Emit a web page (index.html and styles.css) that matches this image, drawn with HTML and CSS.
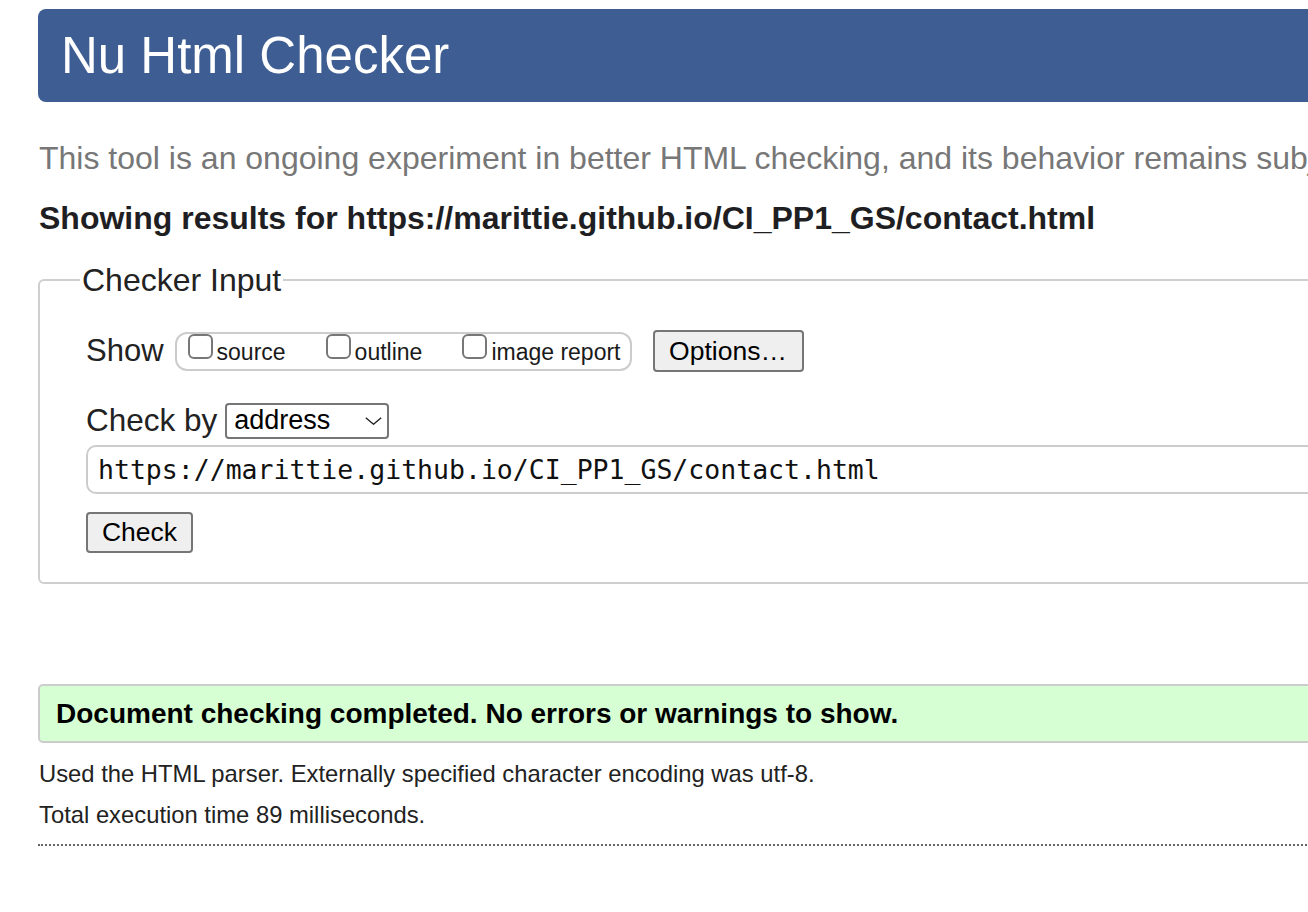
FILE: index.html
```html
<!DOCTYPE html>
<html lang="en">
<head>
<meta charset="utf-8">
<title>Nu Html Checker</title>
<link rel="stylesheet" href="styles.css">
</head>
<body>
<div class="page">
  <h1 class="masthead">Nu Html Checker</h1>
  <p class="intro">This tool is an ongoing experiment in better HTML checking, and its behavior remains subject to change</p>
  <p class="showing">Showing results for https://marittie.github.io/CI_PP1_GS/contact.html</p>
  <form class="checker">
    <fieldset class="input-set">
      <legend class="legend">Checker Input</legend>
      <div class="row show-row">
        <span class="label show-label">Show</span>
        <span class="options-group">
          <label class="opt"><span class="box"></span><span class="opt-text">source</span></label>
          <label class="opt"><span class="box"></span><span class="opt-text">outline</span></label>
          <label class="opt"><span class="box"></span><span class="opt-text">image report</span></label>
        </span>
        <span class="btn options-btn">Options…</span>
      </div>
      <div class="row by-row">
        <span class="label by-label">Check by</span>
        <span class="select">address<svg class="chev" width="17" height="8" viewBox="0 0 17 8"><path d="M0.8 0.8 L8.5 7.2 L16.2 0.8" fill="none" stroke="#222" stroke-width="1.4"/></svg></span>
      </div>
      <div class="url">https://marittie.github.io/CI_PP1_GS/contact.html</div>
      <span class="btn check-btn">Check</span>
    </fieldset>
  </form>
  <div class="success">Document checking completed. No errors or warnings to show.</div>
  <p class="details first">Used the HTML parser. Externally specified character encoding was utf-8.</p>
  <p class="details">Total execution time 89 milliseconds.</p>
  <hr class="dotted">
</div>
</body>
</html>
```
FILE: styles.css
```css
html, body {
  margin: 0;
  padding: 0;
  overflow: hidden;
  background: #fff;
}
body {
  font-family: "Liberation Sans", Arial, sans-serif;
  color: #222;
}
.page {
  width: 1400px;
  padding: 9px 0 0 38px;
}
.masthead {
  margin: 0;
  height: 93px;
  box-sizing: border-box;
  background: #3e5d92;
  color: #fff;
  border-radius: 8px;
  font-weight: normal;
  font-size: 51px;
  line-height: 93px;
  padding-left: 23px;
}
.intro {
  margin: 36px 0 0 1px;
  color: #777;
  font-size: 32px;
  line-height: 40px;
  white-space: nowrap;
}
.showing {
  margin: 20px 0 0 1px;
  font-weight: bold;
  font-size: 32px;
  line-height: 40px;
  color: #1f1f23;
  white-space: nowrap;
}
.checker {
  margin: 25px 0 0 0;
}
.input-set {
  margin: 0;
  border: 2px solid #cfcfcf;
  border-radius: 6px;
  padding: 8px 0 29px 46px;
}
.legend {
  font-size: 32px;
  padding: 0 2px;
  margin-left: -6px;
  line-height: 34px;
  color: #222;
}
.row {
  display: flex;
  align-items: center;
}
.show-row {
  margin-top: 25px;
  height: 42px;
}
.label {
  font-size: 31px;
}
.show-label {
  margin-right: 11px;
}
.by-label {
  font-size: 31.5px;
  margin-right: 8px;
}
.options-group {
  display: flex;
  align-items: flex-start;
  border: 2px solid #cccccc;
  border-radius: 12px;
  height: 39px;
  box-sizing: border-box;
  padding: 0 9px 0 11px;
  gap: 40px;
}
.opt {
  display: flex;
  align-items: flex-start;
  font-size: 23px;
}
.box {
  width: 25px;
  height: 25px;
  border: 2px solid #777;
  border-radius: 6px;
  box-sizing: border-box;
  margin-right: 4px;
}
.opt-text {
  line-height: 25px;
  margin-top: 6px;
  color: #1a1a1a;
}
.btn {
  display: inline-flex;
  align-items: center;
  justify-content: center;
  background: #efefef;
  border: 2px solid #767676;
  border-radius: 4px;
  box-sizing: border-box;
  font-size: 26.5px;
  color: #000;
}
.options-btn {
  margin-left: 21px;
  width: 151px;
  height: 42px;
}
.by-row {
  margin-top: 30px;
}
.select {
  display: inline-flex;
  align-items: center;
  justify-content: space-between;
  width: 164px;
  height: 36px;
  box-sizing: border-box;
  border: 2px solid #767676;
  border-radius: 4px;
  font-size: 27px;
  padding: 0 5px 0 7px;
  color: #000;
}
.url {
  margin-top: 6px;
  height: 49px;
  box-sizing: border-box;
  border: 2px solid #cccccc;
  border-radius: 10px;
  font-family: "DejaVu Sans Mono", Menlo, monospace;
  font-size: 26.5px;
  line-height: 45px;
  padding-left: 10px;
  color: #111;
}
.check-btn {
  margin-top: 18px;
  width: 107px;
  height: 41px;
}
.success {
  margin-top: 100px;
  height: 59px;
  box-sizing: border-box;
  background: #d7ffd4;
  border: 2px solid #cccccc;
  border-radius: 5px;
  font-weight: bold;
  font-size: 28px;
  line-height: 55px;
  padding-left: 16px;
  color: #000;
}
.details {
  margin: 0;
  font-size: 23.8px;
  line-height: 41px;
  padding-left: 1px;
  color: #222;
}
.details.first {
  margin-top: 10px;
}
.dotted {
  margin: 9px 0 0 0;
  border: 0;
  border-top: 2px dotted #666;
  height: 0;
}
```
